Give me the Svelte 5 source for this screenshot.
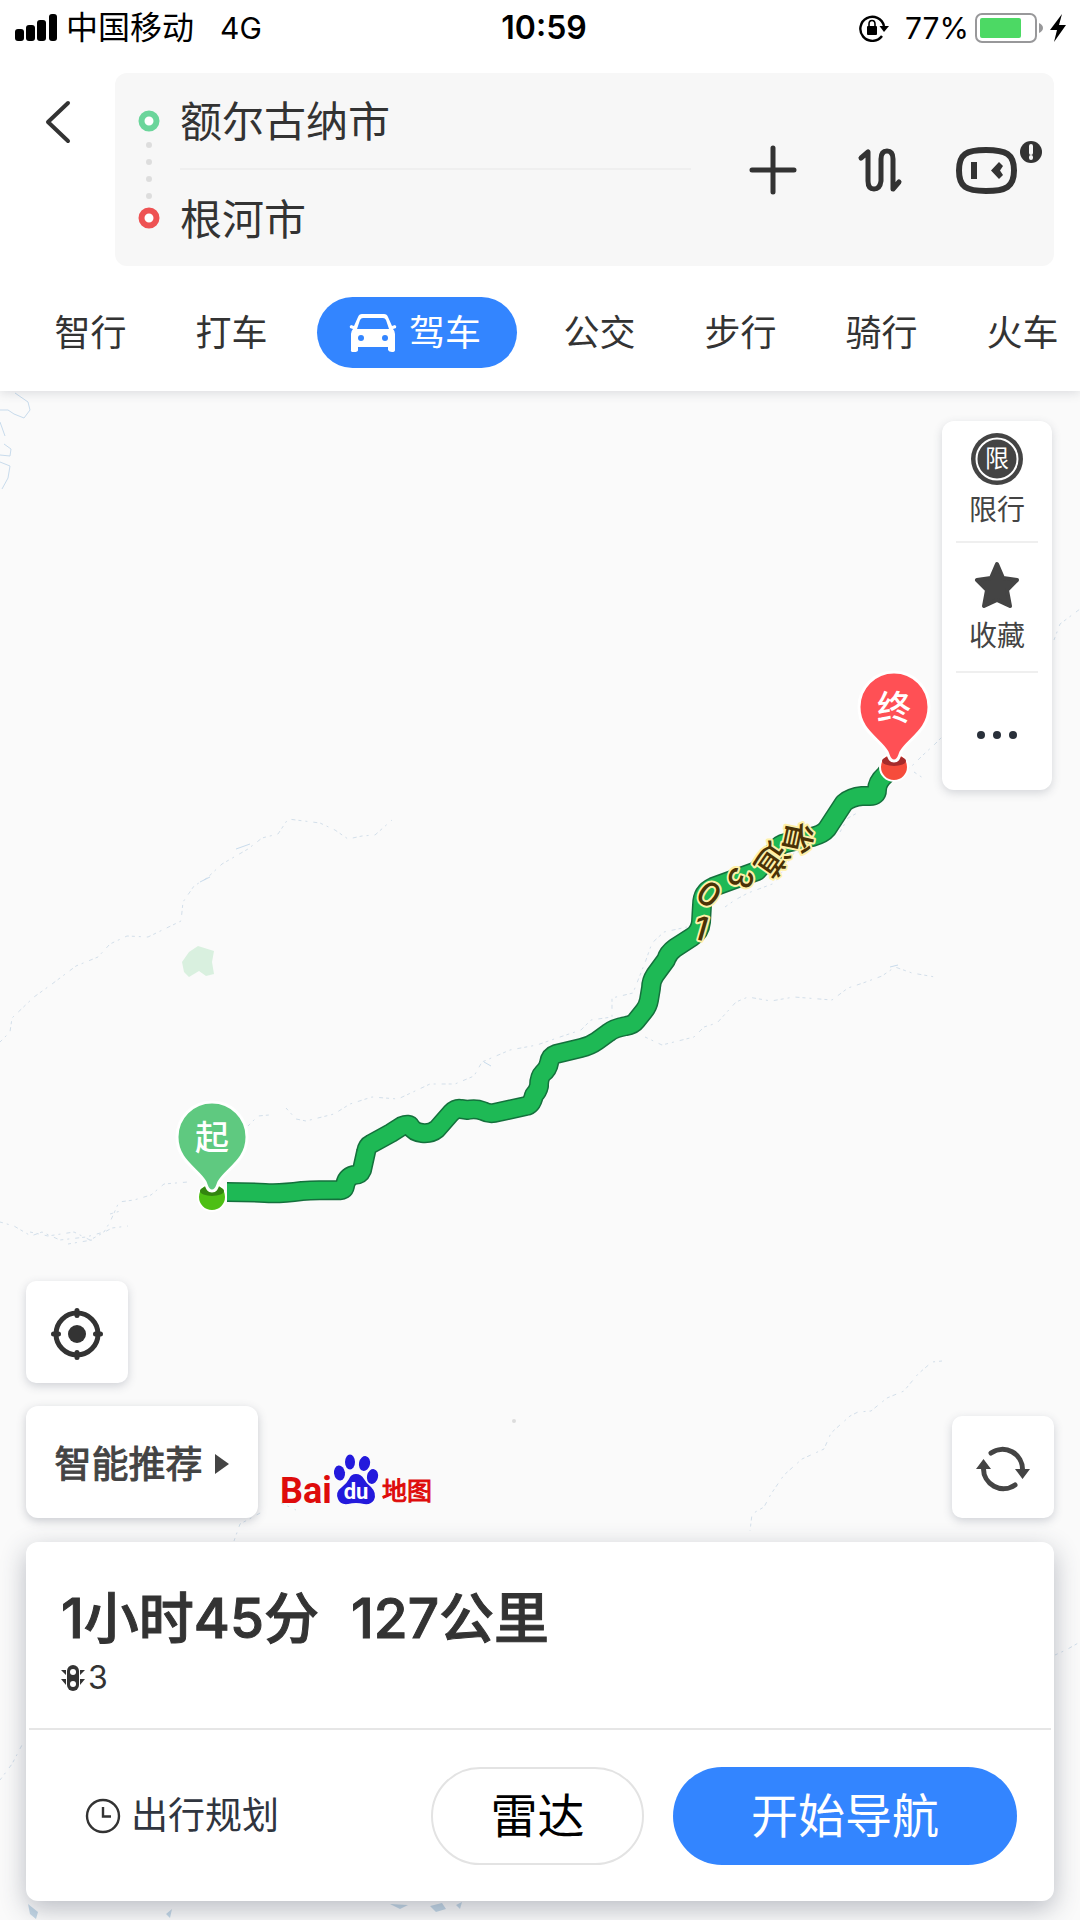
<script>
  let from = '额尔古纳市';
  let to = '根河市';
  let activeTab = '驾车';

  const tabs = ['智行', '打车', '驾车', '公交', '步行', '骑行', '火车'];

  const route =
    'M893 765L885 775Q877 782 877 790Q877 796 870 796L862 796Q851 797 844 803L827 829Q823 834 812 837L786 843Q779 844 774 852L757 871L713 887Q702 892 702 905L701 922Q700 932 692 937L675 948Q668 953 666 960L655 975Q651 981 651 988L649 1000Q648 1006 644 1011L636 1021Q633 1025 626 1026Q614 1028 608 1033L597 1041Q590 1046 581 1048L556 1054Q550 1056 549 1063Q548 1069 543 1073Q539 1077 539 1086Q538 1091 534 1095Q532 1105 526 1106L494 1113Q489 1114 483 1111Q475 1108 468 1110L461 1109Q456 1108 451 1113L437 1129Q431 1134 422 1133Q414 1132 411 1127Q409 1123 402 1126L391 1133L371 1144Q367 1146 366 1152L362 1170Q360 1175 354 1175Q346 1177 345 1186Q344 1191 339 1190Q318 1190 302 1191Q280 1194 265 1193Q246 1192 227 1192';

  const rivers = [
    'M0 1042L10 1032L12 1018L34 997L52 984L76 966L98 957L110 944L127 936L148 937L181 921L183 902L194 886L207 878L222 864L248 849L262 838L278 834L288 819L320 823L335 830L348 839L362 836L375 835L392 820',
    'M0 1222L14 1226L31 1236L42 1232L60 1240L86 1237L104 1232L110 1222L119 1202L134 1200L151 1195L164 1184L188 1182',
    'M30 1232L48 1236L74 1232L90 1240L112 1228L128 1226M110 1214L124 1210M68 1244L92 1240',
    'M248 1126L258 1116L269 1115M286 1108L296 1119L306 1121L334 1114L350 1104L372 1097L398 1099L430 1084L455 1084L474 1076L482 1062L510 1050L537 1045L560 1037L581 1030L591 1020L612 1017L612 998L633 993L646 960L652 943L664 932L687 927',
    'M725 907L735 900L748 893L775 883L794 853L806 850M840 832L848 818L859 812M907 770L914 764L923 755L934 745L942 737M914 772L926 780',
    'M645 1037L662 1045L694 1037L704 1027L717 1023L736 1002L748 997L771 1001L794 997L832 1000L848 988L863 983L882 976L895 967L912 973L935 977',
    'M942 1361L932 1362L918 1374L904 1391L887 1398L871 1411L858 1412L850 1416L831 1433L824 1449L802 1459L784 1475L771 1494L764 1507L752 1514L750 1531',
    'M1055 1655L1066 1650L1080 1642M0 1780L12 1764L22 1745M1054 640L1060 624L1080 609',
    'M281 1503L296 1510M234 1541L240 1524L262 1512'
  ];

  const streams = [
    'M15 393L28 402L30 410L24 418L14 414L8 410L0 410M0 422L5 436M4 444L11 449L10 456L0 455M0 462L10 466L8 478L2 489',
    'M236 849L250 844M200 882L210 877M484 1062L491 1066M890 967L898 965'
  ];

  const roadLabels = [
    { ch: '省', x: 798, y: 838, angle: 102 },
    { ch: '道', x: 772, y: 860, angle: 125 },
    { ch: '3', x: 741, y: 878, angle: 108 },
    { ch: '0', x: 709, y: 894, angle: 35 },
    { ch: '1', x: 701, y: 928, angle: 16 }
  ];

  const pins = [
    { ch: '起', x: 212, y: 1137, fill: '#5fc980', dot: '#4dbf14', shade: '#33850f' },
    { ch: '终', x: 894, y: 707, fill: '#ff5055', dot: '#f64c3b', shade: '#a52b2b' }
  ];
</script>

<div class="page">
  <header>
    <div class="status">
      <div class="status-left">
        <svg class="signal" width="42" height="27" viewBox="0 0 42 27" aria-hidden="true">
          <rect x="0" y="15" width="9" height="12" rx="3" />
          <rect x="11" y="11" width="9" height="16" rx="3" />
          <rect x="22" y="6" width="9" height="21" rx="3" />
          <rect x="34" y="0" width="8" height="27" rx="3" />
        </svg>
        <span class="carrier">中国移动</span>
        <span>4G</span>
      </div>
      <strong class="clock">10:59</strong>
      <div class="status-right">
        <svg width="30" height="28" viewBox="0 0 30 28" aria-hidden="true">
          <path d="M23 22A12 12 0 1 1 25 12" fill="none" stroke="#000" stroke-width="2.4" />
          <path d="M20.500 12H30L25 18Z" />
          <rect x="8" y="12" width="10" height="9" rx="1" />
          <path d="M10 13V10a3 3.500 0 0 1 6 0v3" fill="none" stroke="#000" stroke-width="1.600" />
        </svg>
        <span class="percent">77%</span>
        <svg width="92" height="32" viewBox="0 0 92 32" aria-hidden="true">
          <rect x="1" y="2" width="60" height="28" rx="6" fill="none" stroke="#98989a" stroke-width="2" />
          <rect x="5" y="6" width="41" height="20" rx="2" fill="#4cd964" />
          <path d="M64 11Q68 13 68 16T64 21Z" fill="#98989a" />
          <path d="M87 2L75 18H82L79 30L91 13H84Z" />
        </svg>
      </div>
    </div>

    <div class="search">
      <button class="back" aria-label="返回">
        <svg width="26" height="44" viewBox="0 0 26 44">
          <path d="M23 3L3 22L23 41" fill="none" stroke="#333" stroke-width="4" stroke-linecap="round" stroke-linejoin="round" />
        </svg>
      </button>
      <div class="route-box">
        <svg class="marks" width="22" height="193" viewBox="0 0 22 193" aria-hidden="true">
          <circle cx="11" cy="48" r="7.500" fill="#fff" stroke="#6bd59b" stroke-width="6" />
          <g fill="#ddd">
            <circle cx="11" cy="72" r="3" />
            <circle cx="11" cy="89" r="3" />
            <circle cx="11" cy="106" r="3" />
            <circle cx="11" cy="123" r="3" />
          </g>
          <circle cx="11" cy="145" r="7.500" fill="#fff" stroke="#ee5253" stroke-width="6" />
        </svg>
        <div class="fields">
          <input type="text" aria-label="起点" bind:value={from} />
          <input type="text" aria-label="终点" bind:value={to} />
        </div>
        <div class="actions">
          <button aria-label="添加途经点">
            <svg width="48" height="52" viewBox="0 0 48 52">
              <path d="M24 4V48M3 26H45" stroke="#333" stroke-width="5" stroke-linecap="round" />
            </svg>
          </button>
          <button aria-label="交换起终点">
            <svg width="54" height="52" viewBox="0 0 54 52" fill="none" stroke="#333" stroke-width="5" stroke-linecap="round" stroke-linejoin="round">
              <path d="M12 14L19 8V37Q19 45 25 45T32 37V15Q32 7 38 7T44 15V45L50 38" />
            </svg>
          </button>
          <button aria-label="语音助手">
            <svg width="88" height="68" viewBox="0 0 88 68">
              <path d="M31 14C51 14 59 18 59 34.500S51 55 31 55S4 51 4 34.500S11 14 31 14Z" fill="none" stroke="#333" stroke-width="6" />
              <rect x="16" y="26" width="6" height="17" fill="#333" />
              <path d="M44 26L48 30L45 34.500L48 39L44 43L36 34.500Z" fill="#333" />
              <circle cx="76" cy="16" r="11" fill="#333" />
              <path d="M76 10V17M76 21V22" stroke="#f7f7f7" stroke-width="4" stroke-linecap="round" />
            </svg>
          </button>
        </div>
      </div>
    </div>

    <nav class="tabs">
      {#each tabs as tab}
        <button class:active={tab === activeTab} on:click={() => (activeTab = tab)}>
          {#if tab === activeTab}
            <svg width="48" height="40" viewBox="0 0 48 40" aria-hidden="true">
              <path fill="#fff" d="M13 1H35Q38 1 39 4L43 13L46 12Q48 13 47 15L44 16Q46 18 46 21V37Q46 39 43 39T39 37V34H9V37Q9 39 5 39T2 37V21Q2 18 4 16L1 15Q0 13 2 12L5 13L9 4Q10 1 13 1ZM14 5Q12 5 11 7L8 16H40L37 7Q36 5 34 5Z" />
              <circle cx="12" cy="25" r="3" fill="#3385ff" />
              <circle cx="36" cy="25" r="3" fill="#3385ff" />
            </svg>
          {/if}
          {tab}
        </button>
      {/each}
    </nav>
  </header>

  <main>
    <svg class="map" viewBox="0 391 1080 1529" preserveAspectRatio="xMidYMid slice" aria-hidden="true">
      <path d="M182 962L189 952L198 946L214 951L212 962L214 974L206 976L199 971L189 977L184 972Z" fill="#d9f0df" />
      {#each rivers as d}
        <path class="river" {d} />
      {/each}
      {#each streams as d}
        <path class="stream" {d} />
      {/each}
      <path d="M28 1904L38 1912L36 1919L30 1914ZM166 1914L172 1909L170 1918ZM390 1904L408 1905L400 1909ZM430 1906L442 1903L446 1909L436 1912ZM456 1905L462 1902L460 1909Z" fill="#c3d7e6" />
      <circle cx="514" cy="1421" r="2" fill="#dcdcdc" />

      <path class="route-edge" d={route} />
      <path class="route" d={route} />

      {#each roadLabels as l}
        <text class="road" transform="translate({l.x} {l.y}) rotate({l.angle})" y="12">{l.ch}</text>
      {/each}

      {#each pins as p}
        <g transform="translate({p.x} {p.y})">
          <circle cy="60" r="14" fill={p.dot} stroke="#fff" stroke-width="2" />
          <ellipse cy="54" rx="12" ry="5" fill={p.shade} />
          <path
            d="M0 54C-5 54 -5 49 -7 45C-14 32 -35 24 -35 0A35 35 0 1 1 35 0C35 24 14 32 7 45C5 49 5 54 0 54Z"
            fill={p.fill}
            stroke="#fff"
            stroke-width="3"
          />
          <text class="pin" y="13">{p.ch}</text>
        </g>
      {/each}
    </svg>

    <div class="side">
      <button>
        <svg width="54" height="54" viewBox="0 0 54 54" aria-hidden="true">
          <circle cx="27" cy="27" r="26" fill="#444" />
          <circle cx="27" cy="27" r="20.500" fill="none" stroke="#fff" stroke-width="2" />
          <text class="limit" x="27" y="35">限</text>
        </svg>
        限行
      </button>
      <button>
        <svg width="54" height="54" viewBox="0 0 54 54" aria-hidden="true">
          <path d="M27 6L33 20L47 22L37 32L40 48L27 42L14 48L17 32L7 22L21 20Z" fill="#444" stroke="#444" stroke-width="4" stroke-linejoin="round" />
        </svg>
        收藏
      </button>
      <button aria-label="更多">
        <svg width="54" height="10" viewBox="0 0 54 10" fill="#29303a">
          <circle cx="11" cy="5" r="4" />
          <circle cx="27" cy="5" r="4" />
          <circle cx="43" cy="5" r="4" />
        </svg>
      </button>
    </div>

    <div class="tools">
      <div class="tools-left">
        <button class="square" aria-label="定位">
          <svg width="54" height="54" viewBox="0 0 54 54">
            <circle cx="27" cy="27" r="21" fill="none" stroke="#333" stroke-width="5" />
            <circle cx="27" cy="27" r="9" fill="#333" />
            <path d="M27 3.500V8.500M27 45.500V50.500M3.500 27H8.500M45.500 27H50.500" stroke="#333" stroke-width="5" stroke-linecap="round" />
          </svg>
        </button>
        <div class="prefer">
          <button>
            智能推荐
            <svg width="16" height="22" viewBox="0 0 16 22" aria-hidden="true">
              <path d="M1 1L15 11L1 21Z" fill="#444" />
            </svg>
          </button>
          <svg class="logo" width="156" height="66" viewBox="277 1452 156 66" role="img" aria-label="Baidu 地图">
            <text class="bai" x="280" y="1503">Bai</text>
            <g fill="#2319dc">
              <ellipse cx="339.500" cy="1473" rx="5.500" ry="7.500" transform="rotate(-8 339.500 1473)" />
              <ellipse cx="350" cy="1462" rx="5" ry="7.500" />
              <ellipse cx="364.500" cy="1463.500" rx="5.500" ry="7.500" transform="rotate(12 364.500 1463.500)" />
              <ellipse cx="372.500" cy="1476.500" rx="5.500" ry="7.500" transform="rotate(12 372.500 1476.500)" />
              <path d="M356 1474Q361 1474 364 1479Q366 1483 371 1487Q377 1493 374 1500Q371 1505 364 1504Q356 1502 348 1504Q340 1505 338 1499Q335 1492 342 1487Q347 1483 349 1479Q351 1474 356 1474Z" />
            </g>
            <text class="du" x="356" y="1499">du</text>
            <text class="ditu" x="382" y="1500">地图</text>
          </svg>
        </div>
      </div>
      <button class="square" aria-label="刷新">
        <svg width="56" height="56" viewBox="0 0 56 56" fill="#444">
          <path d="M16 12A20 20 0 0 1 47.500 29M40 44A20 20 0 0 1 8.500 27" fill="none" stroke="#444" stroke-width="5" stroke-linecap="round" />
          <path d="M40 28H55L47.500 38ZM1 28H16L8.500 18Z" />
        </svg>
      </button>
    </div>

    <section class="summary">
      <div class="info">
        <h1><span>1小时45分</span><span>127公里</span></h1>
        <p>
          <svg width="24" height="28" viewBox="0 0 24 28" aria-hidden="true">
            <rect x="6" y="1" width="12" height="26" rx="6" fill="#333" />
            <circle cx="12" cy="8" r="3" fill="#fff" />
            <circle cx="12" cy="20" r="3" fill="#fff" />
            <path d="M0 6H5V11ZM0 15H5V21ZM24 6H19V11ZM24 15H19V21Z" fill="#333" />
          </svg>3
        </p>
      </div>
      <div class="buttons">
        <button class="plan">
          <svg width="36" height="36" viewBox="0 0 36 36" fill="none" stroke="#333" stroke-width="2.400" aria-hidden="true">
            <circle cx="18" cy="18" r="16" />
            <path d="M18 9V18.500H26" />
          </svg>
          出行规划
        </button>
        <button class="radar">雷达</button>
        <button class="start">开始导航</button>
      </div>
    </section>
  </main>
</div>

<style>
  :global(body) {
    margin: 0;
    background: #fafafa;
  }

  .page {
    display: flex;
    flex-direction: column;
    min-height: 100vh;
    font-family: Inter, 'Noto Sans CJK SC', sans-serif;
    line-height: 1;
    color: #333;
  }

  button {
    display: flex;
    align-items: center;
    justify-content: center;
    margin: 0;
    padding: 0;
    border: 0;
    background: none;
    font: inherit;
    color: inherit;
    white-space: nowrap;
    cursor: pointer;
  }

  svg {
    display: block;
    flex: none;
  }

  header {
    position: relative;
    z-index: 1;
    background: #fff;
    box-shadow: 0 2px 10px rgba(60, 70, 90, 0.16);
  }

  .status {
    display: grid;
    grid-template-columns: 1fr auto 1fr;
    align-items: center;
    height: 55px;
    padding: 0 13px 0 15px;
    font-size: 30px;
    color: #000;
  }

  .status-left,
  .status-right {
    display: flex;
    align-items: center;
  }

  .status-right {
    justify-content: flex-end;
  }

  .signal {
    margin-right: 9px;
  }

  .carrier {
    margin-right: 26px;
    font-size: 32px;
  }

  .clock {
    padding-left: 6px;
    font-size: 32px;
    font-weight: 600;
  }

  .percent {
    margin: 0 6px 0 16px;
  }

  .search {
    display: flex;
    align-items: flex-start;
    padding: 18px 26px 0 0;
  }

  .back {
    width: 115px;
    height: 97px;
  }

  .route-box {
    display: flex;
    flex: 1;
    align-items: center;
    height: 193px;
    padding: 0 11px 0 23px;
    border-radius: 12px;
    background: #f7f7f7;
  }

  .marks {
    margin-right: 20px;
  }

  .fields {
    display: flex;
    flex: 1;
    flex-direction: column;
    min-width: 0;
  }

  .fields input {
    box-sizing: border-box;
    width: 100%;
    height: 97px;
    padding: 0 0 4px;
    border: 0;
    outline: 0;
    background: none;
    font: inherit;
    font-size: 42px;
    color: #333;
  }

  .fields input:first-child {
    border-bottom: 2px solid #efefef;
  }

  .actions {
    display: flex;
    align-items: center;
    gap: 52px;
    padding-left: 58px;
  }

  .tabs {
    display: flex;
    align-items: center;
    overflow: hidden;
    padding: 31px 0 23px 20px;
    font-size: 36px;
  }

  .tabs button {
    flex: none;
    width: 141px;
    height: 71px;
  }

  .tabs .active {
    gap: 12px;
    width: 200px;
    margin: 0 12px 0 15px;
    padding-right: 4px;
    border-radius: 36px;
    background: #3385ff;
    color: #fff;
  }

  main {
    position: relative;
    display: flex;
    flex: 1;
    flex-direction: column;
    overflow: hidden;
    padding: 30px 26px 19px;
  }

  .map {
    position: absolute;
    inset: 0;
    width: 100%;
    height: 100%;
  }

  .river,
  .stream {
    fill: none;
    stroke: #d3dfea;
    stroke-width: 1;
    stroke-dasharray: 3 4 2 6 4 3;
  }

  .stream {
    stroke: #c8dbec;
    stroke-dasharray: none;
  }

  .route-edge,
  .route {
    fill: none;
    stroke: #14703c;
    stroke-width: 20;
    stroke-linejoin: round;
  }

  .route {
    stroke: #1eb955;
    stroke-width: 17;
  }

  .road {
    font-size: 33px;
    font-weight: 500;
    text-anchor: middle;
    fill: #4a3206;
    stroke: #fff0a8;
    stroke-width: 4;
    stroke-linejoin: round;
    paint-order: stroke;
  }

  .pin {
    font-size: 34px;
    font-weight: 500;
    text-anchor: middle;
    fill: #fff;
  }

  .limit {
    font-size: 24px;
    text-anchor: middle;
    fill: #fff;
  }

  .side,
  .tools,
  .summary {
    position: relative;
  }

  .side {
    align-self: flex-end;
    width: 110px;
    margin-right: 2px;
    border-radius: 12px;
    background: #fff;
    box-shadow: 0 3px 10px rgba(60, 70, 90, 0.2);
    font-size: 28px;
    line-height: 40px;
    color: #444;
  }

  .side button {
    flex-direction: column;
    gap: 4px;
    width: 82px;
    height: 130px;
    margin: 0 auto;
    border-bottom: 2px solid #efefef;
  }

  .side button:first-child {
    height: 122px;
  }

  .side button:last-child {
    height: 117px;
    padding-top: 6px;
    border: 0;
  }

  .tools {
    display: flex;
    align-items: flex-end;
    justify-content: space-between;
    margin-top: auto;
    padding-bottom: 24px;
  }

  .square {
    width: 102px;
    height: 102px;
    padding-top: 4px;
    border-radius: 10px;
    background: #fff;
    box-shadow: 0 3px 10px rgba(60, 70, 90, 0.22);
  }

  .prefer {
    display: flex;
    align-items: flex-end;
    gap: 19px;
    margin-top: 23px;
  }

  .prefer button {
    gap: 11px;
    width: 232px;
    height: 112px;
    padding-top: 4px;
    border-radius: 12px;
    background: #fff;
    box-shadow: 0 3px 10px rgba(60, 70, 90, 0.26);
    font-size: 37px;
    color: #444;
    -webkit-text-stroke: 1px #444;
  }

  .bai {
    font-family: Roboto, sans-serif;
    font-size: 36px;
    font-weight: 700;
    fill: #de0b0b;
  }

  .du {
    font-family: Roboto, sans-serif;
    font-size: 22px;
    font-weight: 700;
    text-anchor: middle;
    fill: #fff;
  }

  .ditu {
    font-size: 25px;
    fill: #de0b0b;
    stroke: #de0b0b;
    stroke-width: 1;
  }

  .summary {
    border-radius: 12px;
    background: #fff;
    box-shadow: 0 8px 26px rgba(50, 60, 80, 0.32);
  }

  .info {
    box-sizing: border-box;
    height: 188px;
    margin: 0 3px;
    padding: 40px 32px 0;
    border-bottom: 2px solid #e6e6e6;
  }

  h1 {
    display: flex;
    gap: 32px;
    margin: 0;
    font-size: 55px;
    font-weight: 500;
    line-height: 72px;
    -webkit-text-stroke: 1px #333;
  }

  p {
    display: flex;
    align-items: center;
    gap: 3px;
    margin: 4px 0 0;
    font-size: 32px;
    line-height: 40px;
  }

  .buttons {
    display: flex;
    align-items: center;
    height: 171px;
    padding: 0 37px 0 59px;
  }

  .plan {
    gap: 10px;
    margin-right: auto;
    font-size: 37px;
    color: #30353f;
  }

  .radar,
  .start {
    box-sizing: border-box;
    height: 98px;
    border-radius: 49px;
    font-size: 47px;
  }

  .radar {
    width: 213px;
    margin-right: 29px;
    border: 2px solid #e3e3e3;
    color: #000;
  }

  .start {
    width: 344px;
    background: #3385ff;
    color: #fff;
  }
</style>
